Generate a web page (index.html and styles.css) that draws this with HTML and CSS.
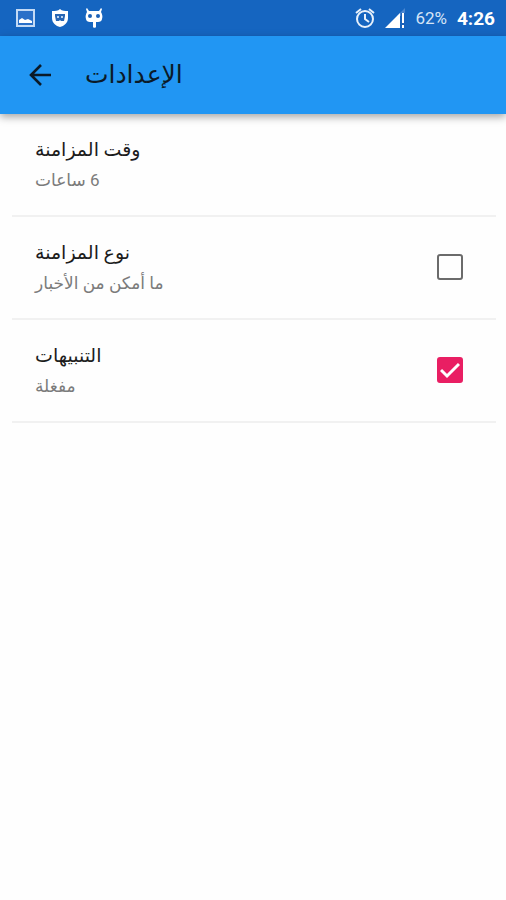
FILE: index.html
```html
<!DOCTYPE html>
<html lang="ar">
<head>
<meta charset="utf-8">
<meta name="viewport" content="width=device-width, initial-scale=1">
<title>الإعدادات</title>
<link rel="stylesheet" href="styles.css">
</head>
<body>
<div class="status">
  <div class="status-group notifications">
    <svg class="status-icon" viewBox="0 0 20 20" aria-hidden="true"><path d="M1 2h17v16H1z" fill="#2a70c8" stroke="#c3daf5" stroke-width="2"/><path d="M3 15v-3l3-2 3 2 3-1 4 2v2z" fill="#fff"/></svg>
    <svg class="status-icon" viewBox="0 0 20 20" aria-hidden="true"><path d="M10 1c2 2 5 2 8 2v7c0 5-4 8-8 9-4-1-8-4-8-9V3c3 0 6 0 8-2z" fill="#fff"/><path d="M5 6h10v2l-1 5h-3l-1-1-1 1H6L5 8z" fill="#2866b4"/><path d="M7 8h2v2H7zm4 0h2v2h-2z" fill="#b9d2ef"/></svg>
    <svg class="status-icon" viewBox="0 0 20 20" aria-hidden="true"><path d="M3 0l2 3h10l2-3 1 1-1 3c1 2 2 4 1 7 0 2-2 3-4 3h-2v5c0 1-3 1-3 0v-5H6c-2 0-4-1-4-3-1-3 0-5 1-7L2 1z" fill="#fff"/><circle cx="6" cy="8" r="2" fill="#1c61b8"/><circle cx="14" cy="8" r="2" fill="#1c61b8"/></svg>
  </div>
  <div class="status-group system">
    <svg class="status-icon" viewBox="0 0 20 20" aria-hidden="true"><g fill="none" stroke="#e8f1fb" stroke-width="2"><circle cx="10" cy="11" r="8"/><path d="M1 5l5-4M19 5l-5-4M10 6v5l4 3"/></g></svg>
    <svg class="status-icon" viewBox="0 0 20 20" aria-hidden="true"><path d="M20 0v8h-8z" fill="#4a86d0"/><path d="M15 5v15H0z" fill="#fff"/><path d="M16 5h4v15h-4z" fill="#1c61b8"/><path d="M17 5h2v10h-2zm0 12h2v3h-2z" fill="#fff"/></svg>
    <span class="battery">62%</span>
    <span class="clock">4:26</span>
  </div>
</div>
<header class="appbar">
  <button class="back" type="button" aria-label="رجوع"><svg viewBox="0 0 24 24" aria-hidden="true"><path d="M23 12H3M13 2L3 12l10 10" fill="none" stroke="#0b1a28" stroke-width="2.600"/></svg></button>
  <h1 dir="rtl">الإعدادات</h1>
</header>
<main class="settings">
  <div class="row">
    <div class="text" dir="rtl"><span class="title">وقت المزامنة</span><span class="summary">6 ساعات</span></div>
  </div>
  <label class="row">
    <span class="text" dir="rtl"><span class="title">نوع المزامنة</span><span class="summary">ما أمكن من الأخبار</span></span>
    <input class="check" type="checkbox">
  </label>
  <label class="row">
    <span class="text" dir="rtl"><span class="title">التنبيهات</span><span class="summary">مفغلة</span></span>
    <input class="check" type="checkbox" checked>
  </label>
</main>
</body>
</html>
```
FILE: styles.css
```css
* { box-sizing: border-box; }
body {
  margin: 0;
  background: #fefefe;
  color: #1c1c1c;
  font-family: Roboto, "DejaVu Sans", sans-serif;
}
.status {
  display: flex;
  justify-content: space-between;
  align-items: center;
  height: 36px;
  padding: 0 11px 0 16px;
  background: #1565c0;
  color: #fff;
}
.status-group { display: flex; align-items: center; }
.notifications { gap: 14px; }
.system { gap: 10px; }
.status-icon { display: block; width: 20px; height: 20px; }
.battery { font-size: 17px; color: #d5e4f6; }
.clock { font-size: 19px; font-weight: 700; }
.appbar {
  display: flex;
  align-items: center;
  gap: 33px;
  height: 78px;
  padding: 0 28px;
  background: #2196f3;
  box-shadow: 0 3px 8px rgba(0, 0, 0, 0.35);
}
.back {
  width: 24px;
  height: 24px;
  padding: 0;
  border: 0;
  background: none;
  cursor: pointer;
}
.back svg { display: block; width: 24px; height: 24px; }
h1 {
  margin: 0;
  color: #0b1a28;
  font-size: 25px;
  font-weight: 400;
  line-height: 32px;
}
.settings { padding: 0 10px 0 12px; }
.row {
  display: flex;
  align-items: center;
  justify-content: space-between;
  min-height: 103px;
  padding: 0 33px 2px 23px;
  border-bottom: 2px solid #f1f1f1;
}
.text { display: flex; flex-direction: column; text-align: left; }
.title { font-size: 19px; line-height: 32px; }
.summary { color: #7b7b7b; font-size: 17px; line-height: 28px; }
.check {
  appearance: none;
  flex: none;
  width: 26px;
  height: 26px;
  margin: 0;
  border: 2px solid #6b6b6b;
  border-radius: 3px;
}
.check:checked {
  border-color: #e91e63;
  background: #e91e63 url("data:image/svg+xml,%3Csvg xmlns='http://www.w3.org/2000/svg' viewBox='0 0 20 20'%3E%3Cpath d='M1 10l6 6L19 4' fill='none' stroke='white' stroke-width='3'/%3E%3C/svg%3E") center / 20px no-repeat;
}
```
